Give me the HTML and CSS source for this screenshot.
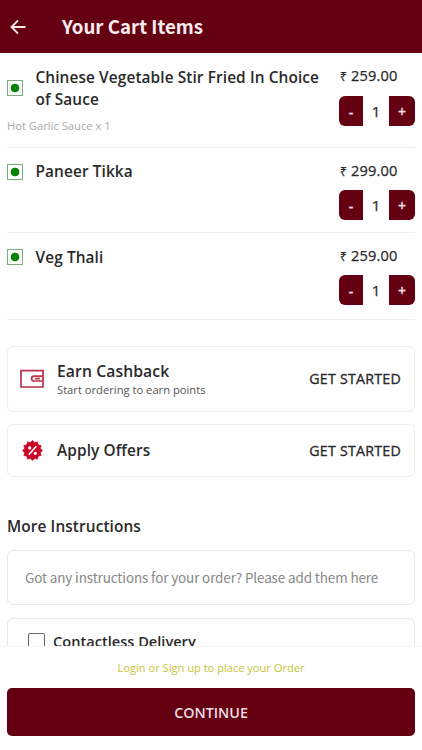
FILE: index.html
```html
<!DOCTYPE html>
<html lang="en">
<head>
<meta charset="utf-8">
<meta name="viewport" content="width=device-width, initial-scale=1">
<title>Your Cart Items</title>
<link rel="stylesheet" href="styles.css">
</head>
<body>
<div class="screen">
  <header class="topbar">
    <svg class="back" viewBox="0 0 16 16" width="16" height="16"><path d="M15.5 8H1.5M8 1.5L1.5 8L8 14.5"/></svg>
    <h1>Your Cart Items</h1>
  </header>
  <main class="content">
    <section class="item item-first">
      <div class="details">
        <div class="name-row"><span class="veg"></span><h2>Chinese Vegetable Stir Fried In Choice<br>of Sauce</h2></div>
        <p class="addon">Hot Garlic Sauce x 1</p>
      </div>
      <div class="side">
        <div class="price"><span class="rupee">₹</span> 259.00</div>
        <div class="stepper"><button class="minus">-</button><span>1</span><button class="plus">+</button></div>
      </div>
    </section>
    <section class="item">
      <div class="details">
        <div class="name-row"><span class="veg"></span><h2>Paneer Tikka</h2></div>
      </div>
      <div class="side">
        <div class="price"><span class="rupee">₹</span> 299.00</div>
        <div class="stepper"><button class="minus">-</button><span>1</span><button class="plus">+</button></div>
      </div>
    </section>
    <section class="item item-last">
      <div class="details">
        <div class="name-row"><span class="veg"></span><h2>Veg Thali</h2></div>
      </div>
      <div class="side">
        <div class="price"><span class="rupee">₹</span> 259.00</div>
        <div class="stepper"><button class="minus">-</button><span>1</span><button class="plus">+</button></div>
      </div>
    </section>
    <section class="card cashback">
      <svg class="icon" viewBox="0 0 24 20" width="24" height="20"><path class="line" d="M1 1.7H23V18H1ZM23 7.2H14Q11.6 7.2 11.6 9.6T14 12H23M15 9.6H20"/></svg>
      <div class="label"><h2>Earn Cashback</h2><p>Start ordering to earn points</p></div>
      <span class="action">GET STARTED</span>
    </section>
    <section class="card offers">
      <svg class="icon" viewBox="-11.5 -10.5 24 21" width="24" height="21">
        <path class="seal" d="M0-10L2.3-7.9L5-8.7L5.7-5.7L8.7-5L7.9-2.3L10 0L7.9 2.3L8.7 5L5.7 5.7L5 8.7L2.3 7.9L0 10L-2.3 7.9L-5 8.7L-5.7 5.7L-8.7 5L-7.9 2.3L-10 0L-7.9-2.3L-8.7-5L-5.7-5.7L-5-8.7L-2.3-7.9Z"/>
        <path class="percent" d="M3.8-4.2L-3.8 4.2"/><circle class="dot" cx="-2.8" cy="-2.6" r="1.6"/><circle class="dot" cx="2.8" cy="2.8" r="1.6"/>
      </svg>
      <div class="label"><h2>Apply Offers</h2></div>
      <span class="action">GET STARTED</span>
    </section>
    <h2 class="heading">More Instructions</h2>
    <div class="note"><span>Got any instructions for your order? Please add them here</span></div>
    <div class="contactless"><span class="box"></span><h2>Contactless Delivery</h2></div>
  </main>
  <footer class="footer">
    <p>Login or Sign up to place your Order</p>
    <button class="continue">CONTINUE</button>
  </footer>
</div>
</body>
</html>
```
FILE: styles.css
```css
* { box-sizing: border-box; }
body { margin: 0; background: #fefefe; color: #2a2a2a; font-family: "Open Sans", "Noto Sans", sans-serif; }
h1, h2, p { margin: 0; }
h2 { font-size: 15.4px; letter-spacing: .1px; font-weight: 600; line-height: 21px; white-space: nowrap; }
button { border: 0; padding: 0; font-family: inherit; color: #eedfe2; background: #650012; }

.screen { height: 750px; display: flex; flex-direction: column; overflow: hidden; }
.topbar { flex: none; height: 53px; display: flex; align-items: center; padding-left: 10px; background: #650012; }
.back { fill: none; stroke: #f5e6e8; stroke-width: 1.8; }
.topbar h1 { margin: -1px 0 0 36px; font: 700 18.7px/28px "Noto Sans CJK JP", sans-serif; color: #f8ecee; white-space: nowrap; }

.content { height: 593px; padding: 0 7px; overflow: hidden; }
.item { height: 85px; display: flex; justify-content: space-between; padding-top: 12px; border-bottom: 1px solid #eee; }
.item-first { height: 95px; padding-top: 13px; }
.item-last { height: 87px; }
.name-row { display: flex; align-items: flex-start; margin-top: 1px; }
.veg { flex: none; width: 16px; height: 16px; margin: 3px 12.5px 0 0; border: 1px solid #78b07c; background: radial-gradient(circle, #078307 0 4px, transparent 4.7px); }
.item-first .veg { margin-top: 13px; }
.item-first h2 { line-height: 22px; }
.item-last .name-row { margin-top: 2px; }
.item-last .veg { margin-top: 2px; }
.addon { margin-top: 7px; font-size: 11.2px; line-height: 16px; color: #aaa; }
.side { flex: none; width: 76px; }
.price { padding-left: 1px; font-size: 14.6px; letter-spacing: .15px; -webkit-text-stroke: .25px; line-height: 20px; white-space: nowrap; }
.rupee { font-size: 12px; }
.stepper { margin-top: 8px; height: 30px; display: grid; grid-template-columns: 24px 26px 26px; text-align: center; font-size: 15px; line-height: 30px; -webkit-text-stroke: .25px; }
.item-first .stepper { margin-top: 9px; }
.item-first .price { margin-top: -1px; }
.minus, .plus { font-size: 14px; font-weight: 600; }
.minus { border-radius: 6px 0 0 6px; }
.plus { border-radius: 0 6px 6px 0; }

.card { display: flex; align-items: center; padding: 0 13px; border: 1px solid #eee; border-radius: 6px; }
.cashback { height: 66px; margin-top: 26px; }
.offers { height: 53px; margin-top: 12px; }
.icon { flex: none; margin: 0 13px 0 -1px; }
.offers .icon { margin: 0 12px 0 0; }
.line { fill: none; stroke: #bb304b; stroke-width: 1.7; }
.seal { fill: #c9082a; stroke: #c9082a; stroke-width: .6; stroke-linejoin: round; }
.percent { stroke: #fff; stroke-width: 1.6; }
.dot { fill: #fff; }
.label { flex: 1; }
.cashback h2 { font-size: 15.7px; }
.label p { font-size: 11.2px; line-height: 16px; color: #555; }
.action { margin-top: -1px; font-size: 14.2px; letter-spacing: .25px; -webkit-text-stroke: .35px; white-space: nowrap; }
.heading { margin-top: 39px; }
.note { height: 55px; margin-top: 13px; padding: 0 0 2px 17px; display: flex; align-items: center; border: 1px solid #e9e9e9; border-radius: 6px; font: 400 13.5px/20px "Noto Sans CJK JP", sans-serif; letter-spacing: -.14px; color: #888; white-space: nowrap; }
.contactless { height: 60px; margin-top: 13px; padding: 12px 0 0 20px; display: flex; border: 1px solid #e9e9e9; border-radius: 6px; }
.contactless h2 { font-size: 14.6px; letter-spacing: 0; }
.box { width: 17px; height: 17px; margin: 2px 8px 0 0; border: 1.5px solid #666; border-radius: 2px; }

.footer { flex: 1; padding: 12px 7px 0; text-align: center; border-top: 1px solid #f7f7f7; background: #fefefe; }
.footer p { font-size: 11.1px; line-height: 18px; color: #c9c435; }
.continue { display: block; width: 100%; height: 48px; margin-top: 11px; border-radius: 5px; font-size: 14.3px; font-weight: 600; }
```
